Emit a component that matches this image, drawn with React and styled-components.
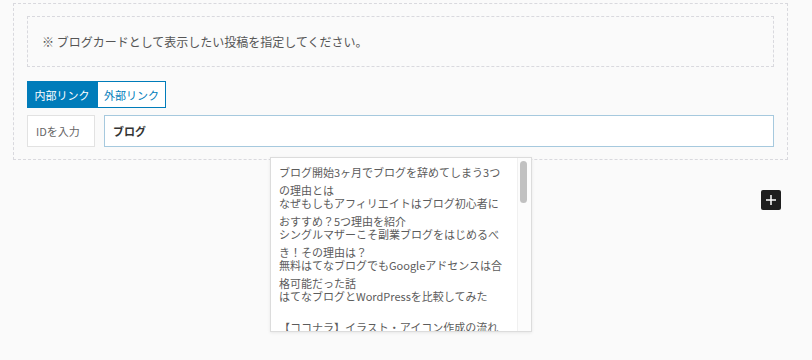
import React from "react";
import styled, { createGlobalStyle } from "styled-components";

const GlobalStyle = createGlobalStyle`
  body {
    margin: 0;
    background: #fafafa;
    font-family: "Noto Sans CJK JP", "Noto Sans", sans-serif;
    color: #555;
  }
`;

const Page = styled.div`
  position: relative;
  height: 360px;
  padding: 3px 0 0 13px;
  box-sizing: border-box;
  overflow: hidden;
`;

const Block = styled.div`
  width: 775px;
  box-sizing: border-box;
  border: 1px dashed #d9d9de;
  padding: 12px 13px 12px 13px;
`;

const Note = styled.div`
  height: 51px;
  box-sizing: border-box;
  border: 1px dashed #d9d9de;
  padding: 0 14px;
  display: flex;
  align-items: center;
  font-size: 12px;
  color: #555;
`;

const Tabs = styled.div`
  display: flex;
  margin-top: 14px;
`;

const Tab = styled.button`
  height: 27px;
  width: ${(p) => p.width}px;
  box-sizing: border-box;
  border: 1px solid #007cba;
  background: ${(p) => (p.active ? "#007cba" : "#fff")};
  color: ${(p) => (p.active ? "#fff" : "#007cba")};
  font-family: inherit;
  font-size: 11px;
  padding: 0;
  display: flex;
  align-items: center;
  justify-content: center;
  cursor: pointer;
`;

const Row = styled.div`
  display: flex;
  gap: 9px;
  margin-top: 7px;
  height: 32px;
`;

const Label = styled.div`
  width: 68px;
  box-sizing: border-box;
  border: 1px solid #e2e2e2;
  background: #fff;
  padding-left: 8px;
  display: flex;
  align-items: center;
  font-size: 11px;
  color: #666;
`;

const Input = styled.input`
  flex: 1;
  box-sizing: border-box;
  border: 1px solid #a6c9de;
  background: #fff;
  padding: 0 8px;
  font-family: inherit;
  font-size: 11px;
  font-weight: 700;
  color: #333;
  outline: none;
`;

const InserterRow = styled.div`
  width: 775px;
  display: flex;
  justify-content: flex-end;
  padding-right: 7px;
  box-sizing: border-box;
  margin-top: 30px;
`;

const PlusButton = styled.button`
  width: 20px;
  height: 20px;
  border: none;
  border-radius: 2px;
  background: #1e1e1e;
  padding: 0;
  display: flex;
  align-items: center;
  justify-content: center;
  cursor: pointer;
`;

const Suggestions = styled.div`
  position: absolute;
  left: 270px;
  top: 157px;
  width: 262px;
  height: 175px;
  box-sizing: border-box;
  border: 1px solid #dcdcdc;
  background: #fff;
  box-shadow: 0 1px 3px rgba(0, 0, 0, 0.08);
  overflow: hidden;
  padding: 6px 0 0 8px;
`;

const Item = styled.div`
  width: 226px;
  height: 31px;
  font-size: 11px;
  line-height: 17.5px;
  color: #5c5c5c;
  cursor: pointer;
`;

const Track = styled.div`
  position: absolute;
  top: 0;
  right: 0;
  bottom: 0;
  width: 13px;
  border-left: 1px solid #f0f0f0;
  background: #fcfcfc;
`;

const Thumb = styled.div`
  width: 7px;
  height: 42px;
  margin: 3px 0 0 2px;
  border-radius: 4px;
  background: #c1c1c1;
`;

const posts = [
  "ブログ開始3ヶ月でブログを辞めてしまう3つの理由とは",
  "なぜもしもアフィリエイトはブログ初心者におすすめ？5つ理由を紹介",
  "シングルマザーこそ副業ブログをはじめるべき！その理由は？",
  "無料はてなブログでもGoogleアドセンスは合格可能だった話",
  "はてなブログとWordPressを比較してみた",
  "【ココナラ】イラスト・アイコン作成の流れと料金",
];

const App = () => {
  return (
    <Page>
      <GlobalStyle />
      <Block>
        <Note>※ ブログカードとして表示したい投稿を指定してください。</Note>
        <Tabs>
          <Tab active width={70}>
            内部リンク
          </Tab>
          <Tab width={69}>外部リンク</Tab>
        </Tabs>
        <Row>
          <Label>IDを入力</Label>
          <Input defaultValue="ブログ" />
        </Row>
      </Block>
      <InserterRow>
        <PlusButton aria-label="ブロックを追加">
          <svg width="12" height="12" viewBox="0 0 12 12">
            <path d="M6 1v10M1 6h10" stroke="#fff" strokeWidth="1.5" />
          </svg>
        </PlusButton>
      </InserterRow>
      <Suggestions>
        {posts.map((title) => (
          <Item key={title}>{title}</Item>
        ))}
        <Track>
          <Thumb />
        </Track>
      </Suggestions>
    </Page>
  );
};

export default App;
